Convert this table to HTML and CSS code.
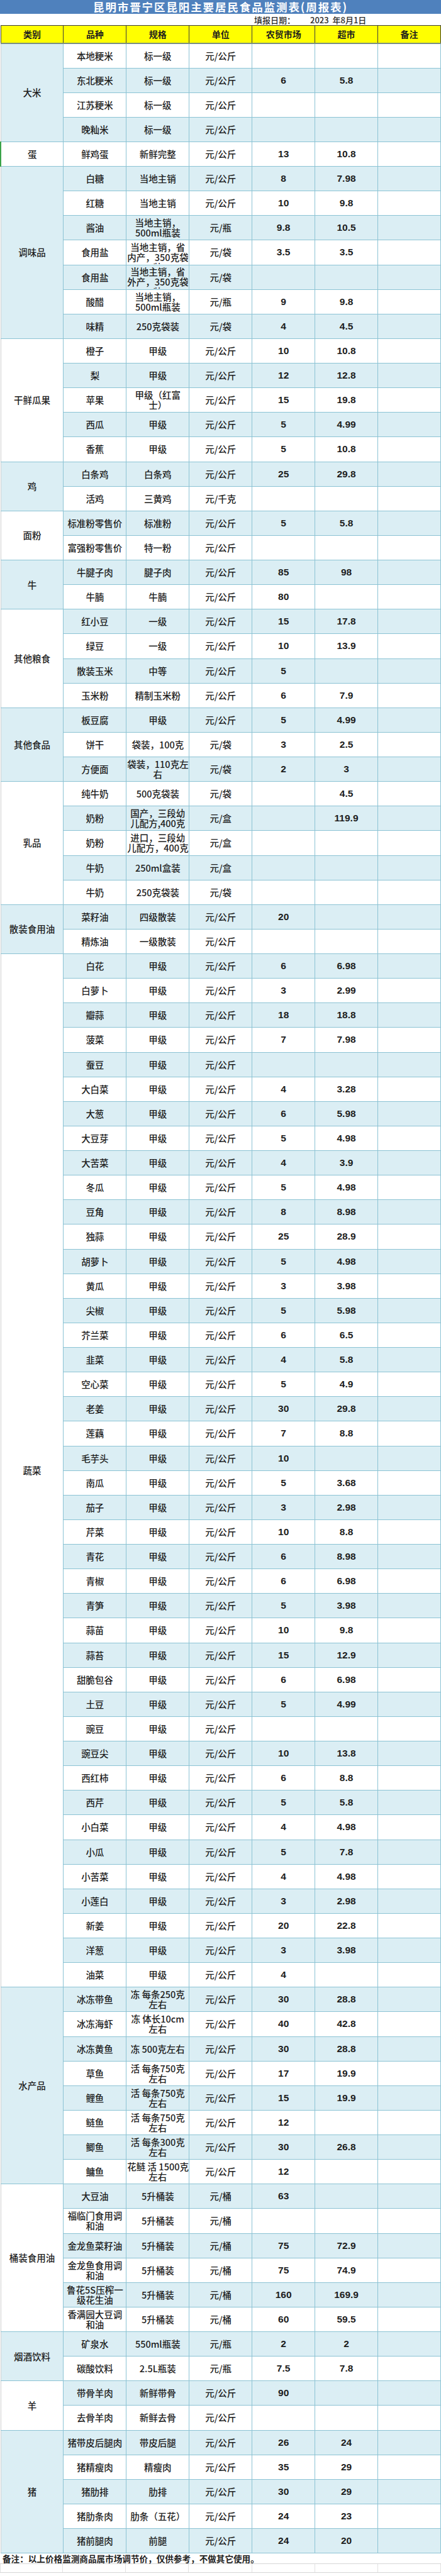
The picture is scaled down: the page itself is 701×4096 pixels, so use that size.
FILE: index.html
```html
<!DOCTYPE html>
<html lang="zh-CN">
<head>
<meta charset="utf-8">
<title>昆明市晋宁区昆阳主要居民食品监测表(周报表)</title>
<link rel="stylesheet" href="styles.css">
</head>
<body>
<div class="sheet">
  <div class="title">昆明市晋宁区昆阳主要居民食品监测表(周报表)</div>
  <div class="date"><span class="date-label">填报日期：</span><span class="date-value">2023&nbsp;&nbsp;年8月1日</span></div>
  <table class="grid">
    <colgroup><col><col><col><col><col><col><col></colgroup>
    <thead>
      <tr><th>类别</th><th>品种</th><th>规格</th><th>单位</th><th>农贸市场</th><th>超市</th><th>备注</th></tr>
    </thead>
    <tbody>
      <tr><td class="cat cat-blue" rowspan="4">大米</td><td>本地粳米</td><td>标一级</td><td>元/公斤</td><td class="num"></td><td class="num"></td><td></td></tr>
      <tr><td>东北粳米</td><td>标一级</td><td>元/公斤</td><td class="num">6</td><td class="num">5.8</td><td></td></tr>
      <tr><td>江苏粳米</td><td>标一级</td><td>元/公斤</td><td class="num"></td><td class="num"></td><td></td></tr>
      <tr><td>晚籼米</td><td>标一级</td><td>元/公斤</td><td class="num"></td><td class="num"></td><td></td></tr>

      <tr><td class="cat cat-white cat-green" rowspan="1">蛋</td><td>鲜鸡蛋</td><td>新鲜完整</td><td>元/公斤</td><td class="num">13</td><td class="num">10.8</td><td></td></tr>

      <tr><td class="cat cat-blue" rowspan="7">调味品</td><td>白糖</td><td>当地主销</td><td>元/公斤</td><td class="num">8</td><td class="num">7.98</td><td></td></tr>
      <tr><td>红糖</td><td>当地主销</td><td>元/公斤</td><td class="num">10</td><td class="num">9.8</td><td></td></tr>
      <tr><td>酱油</td><td>当地主销，<br>500ml瓶装</td><td>元/瓶</td><td class="num">9.8</td><td class="num">10.5</td><td></td></tr>
      <tr><td>食用盐</td><td><div class="clip">当地主销，省<br>内产，350克袋<br>装</div></td><td>元/袋</td><td class="num">3.5</td><td class="num">3.5</td><td></td></tr>
      <tr><td>食用盐</td><td><div class="clip">当地主销，省<br>外产，350克袋<br>装</div></td><td>元/袋</td><td class="num"></td><td class="num"></td><td></td></tr>
      <tr><td>酸醋</td><td>当地主销，<br>500ml瓶装</td><td>元/瓶</td><td class="num">9</td><td class="num">9.8</td><td></td></tr>
      <tr><td>味精</td><td>250克袋装</td><td>元/袋</td><td class="num">4</td><td class="num">4.5</td><td></td></tr>

      <tr><td class="cat cat-white" rowspan="5">干鲜瓜果</td><td>橙子</td><td>甲级</td><td>元/公斤</td><td class="num">10</td><td class="num">10.8</td><td></td></tr>
      <tr><td>梨</td><td>甲级</td><td>元/公斤</td><td class="num">12</td><td class="num">12.8</td><td></td></tr>
      <tr><td>苹果</td><td>甲级（红富<br>士）</td><td>元/公斤</td><td class="num">15</td><td class="num">19.8</td><td></td></tr>
      <tr><td>西瓜</td><td>甲级</td><td>元/公斤</td><td class="num">5</td><td class="num">4.99</td><td></td></tr>
      <tr><td>香蕉</td><td>甲级</td><td>元/公斤</td><td class="num">5</td><td class="num">10.8</td><td></td></tr>

      <tr><td class="cat cat-blue" rowspan="2">鸡</td><td>白条鸡</td><td>白条鸡</td><td>元/公斤</td><td class="num">25</td><td class="num">29.8</td><td></td></tr>
      <tr><td>活鸡</td><td>三黄鸡</td><td>元/千克</td><td class="num"></td><td class="num"></td><td></td></tr>

      <tr><td class="cat cat-white" rowspan="2">面粉</td><td>标准粉零售价</td><td>标准粉</td><td>元/公斤</td><td class="num">5</td><td class="num">5.8</td><td></td></tr>
      <tr><td>富强粉零售价</td><td>特一粉</td><td>元/公斤</td><td class="num"></td><td class="num"></td><td></td></tr>

      <tr><td class="cat cat-blue" rowspan="2">牛</td><td>牛腱子肉</td><td>腱子肉</td><td>元/公斤</td><td class="num">85</td><td class="num">98</td><td></td></tr>
      <tr><td>牛腩</td><td>牛腩</td><td>元/公斤</td><td class="num">80</td><td class="num"></td><td></td></tr>

      <tr><td class="cat cat-white" rowspan="4">其他粮食</td><td>红小豆</td><td>一级</td><td>元/公斤</td><td class="num">15</td><td class="num">17.8</td><td></td></tr>
      <tr><td>绿豆</td><td>一级</td><td>元/公斤</td><td class="num">10</td><td class="num">13.9</td><td></td></tr>
      <tr><td>散装玉米</td><td>中等</td><td>元/公斤</td><td class="num">5</td><td class="num"></td><td></td></tr>
      <tr><td>玉米粉</td><td>精制玉米粉</td><td>元/公斤</td><td class="num">6</td><td class="num">7.9</td><td></td></tr>

      <tr><td class="cat cat-blue" rowspan="3">其他食品</td><td>板豆腐</td><td>甲级</td><td>元/公斤</td><td class="num">5</td><td class="num">4.99</td><td></td></tr>
      <tr><td>饼干</td><td>袋装，100克</td><td>元/袋</td><td class="num">3</td><td class="num">2.5</td><td></td></tr>
      <tr><td>方便面</td><td>袋装，110克左<br>右</td><td>元/袋</td><td class="num">2</td><td class="num">3</td><td></td></tr>

      <tr><td class="cat cat-white" rowspan="5">乳品</td><td>纯牛奶</td><td>500克袋装</td><td>元/袋</td><td class="num"></td><td class="num">4.5</td><td></td></tr>
      <tr><td>奶粉</td><td>国产，三段幼<br>儿配方,400克</td><td>元/盒</td><td class="num"></td><td class="num">119.9</td><td></td></tr>
      <tr><td>奶粉</td><td>进口，三段幼<br>儿配方，400克</td><td>元/盒</td><td class="num"></td><td class="num"></td><td></td></tr>
      <tr><td>牛奶</td><td>250ml盒装</td><td>元/盒</td><td class="num"></td><td class="num"></td><td></td></tr>
      <tr><td>牛奶</td><td>250克袋装</td><td>元/袋</td><td class="num"></td><td class="num"></td><td></td></tr>

      <tr><td class="cat cat-blue" rowspan="2">散装食用油</td><td>菜籽油</td><td>四级散装</td><td>元/公斤</td><td class="num">20</td><td class="num"></td><td></td></tr>
      <tr><td>精炼油</td><td>一级散装</td><td>元/公斤</td><td class="num"></td><td class="num"></td><td></td></tr>

      <tr><td class="cat cat-white" rowspan="42">蔬菜</td><td>白花</td><td>甲级</td><td>元/公斤</td><td class="num">6</td><td class="num">6.98</td><td></td></tr>
      <tr><td>白萝卜</td><td>甲级</td><td>元/公斤</td><td class="num">3</td><td class="num">2.99</td><td></td></tr>
      <tr><td>瓣蒜</td><td>甲级</td><td>元/公斤</td><td class="num">18</td><td class="num">18.8</td><td></td></tr>
      <tr><td>菠菜</td><td>甲级</td><td>元/公斤</td><td class="num">7</td><td class="num">7.98</td><td></td></tr>
      <tr><td>蚕豆</td><td>甲级</td><td>元/公斤</td><td class="num"></td><td class="num"></td><td></td></tr>
      <tr><td>大白菜</td><td>甲级</td><td>元/公斤</td><td class="num">4</td><td class="num">3.28</td><td></td></tr>
      <tr><td>大葱</td><td>甲级</td><td>元/公斤</td><td class="num">6</td><td class="num">5.98</td><td></td></tr>
      <tr><td>大豆芽</td><td>甲级</td><td>元/公斤</td><td class="num">5</td><td class="num">4.98</td><td></td></tr>
      <tr><td>大苦菜</td><td>甲级</td><td>元/公斤</td><td class="num">4</td><td class="num">3.9</td><td></td></tr>
      <tr><td>冬瓜</td><td>甲级</td><td>元/公斤</td><td class="num">5</td><td class="num">4.98</td><td></td></tr>
      <tr><td>豆角</td><td>甲级</td><td>元/公斤</td><td class="num">8</td><td class="num">8.98</td><td></td></tr>
      <tr><td>独蒜</td><td>甲级</td><td>元/公斤</td><td class="num">25</td><td class="num">28.9</td><td></td></tr>
      <tr><td>胡萝卜</td><td>甲级</td><td>元/公斤</td><td class="num">5</td><td class="num">4.98</td><td></td></tr>
      <tr><td>黄瓜</td><td>甲级</td><td>元/公斤</td><td class="num">3</td><td class="num">3.98</td><td></td></tr>
      <tr><td>尖椒</td><td>甲级</td><td>元/公斤</td><td class="num">5</td><td class="num">5.98</td><td></td></tr>
      <tr><td>芥兰菜</td><td>甲级</td><td>元/公斤</td><td class="num">6</td><td class="num">6.5</td><td></td></tr>
      <tr><td>韭菜</td><td>甲级</td><td>元/公斤</td><td class="num">4</td><td class="num">5.8</td><td></td></tr>
      <tr><td>空心菜</td><td>甲级</td><td>元/公斤</td><td class="num">5</td><td class="num">4.9</td><td></td></tr>
      <tr><td>老姜</td><td>甲级</td><td>元/公斤</td><td class="num">30</td><td class="num">29.8</td><td></td></tr>
      <tr><td>莲藕</td><td>甲级</td><td>元/公斤</td><td class="num">7</td><td class="num">8.8</td><td></td></tr>
      <tr><td>毛芋头</td><td>甲级</td><td>元/公斤</td><td class="num">10</td><td class="num"></td><td></td></tr>
      <tr><td>南瓜</td><td>甲级</td><td>元/公斤</td><td class="num">5</td><td class="num">3.68</td><td></td></tr>
      <tr><td>茄子</td><td>甲级</td><td>元/公斤</td><td class="num">3</td><td class="num">2.98</td><td></td></tr>
      <tr><td>芹菜</td><td>甲级</td><td>元/公斤</td><td class="num">10</td><td class="num">8.8</td><td></td></tr>
      <tr><td>青花</td><td>甲级</td><td>元/公斤</td><td class="num">6</td><td class="num">8.98</td><td></td></tr>
      <tr><td>青椒</td><td>甲级</td><td>元/公斤</td><td class="num">6</td><td class="num">6.98</td><td></td></tr>
      <tr><td>青笋</td><td>甲级</td><td>元/公斤</td><td class="num">5</td><td class="num">3.98</td><td></td></tr>
      <tr><td>蒜苗</td><td>甲级</td><td>元/公斤</td><td class="num">10</td><td class="num">9.8</td><td></td></tr>
      <tr><td>蒜苔</td><td>甲级</td><td>元/公斤</td><td class="num">15</td><td class="num">12.9</td><td></td></tr>
      <tr><td>甜脆包谷</td><td>甲级</td><td>元/公斤</td><td class="num">6</td><td class="num">6.98</td><td></td></tr>
      <tr><td>土豆</td><td>甲级</td><td>元/公斤</td><td class="num">5</td><td class="num">4.99</td><td></td></tr>
      <tr><td>豌豆</td><td>甲级</td><td>元/公斤</td><td class="num"></td><td class="num"></td><td></td></tr>
      <tr><td>豌豆尖</td><td>甲级</td><td>元/公斤</td><td class="num">10</td><td class="num">13.8</td><td></td></tr>
      <tr><td>西红柿</td><td>甲级</td><td>元/公斤</td><td class="num">6</td><td class="num">8.8</td><td></td></tr>
      <tr><td>西芹</td><td>甲级</td><td>元/公斤</td><td class="num">5</td><td class="num">5.8</td><td></td></tr>
      <tr><td>小白菜</td><td>甲级</td><td>元/公斤</td><td class="num">4</td><td class="num">4.98</td><td></td></tr>
      <tr><td>小瓜</td><td>甲级</td><td>元/公斤</td><td class="num">5</td><td class="num">7.8</td><td></td></tr>
      <tr><td>小苦菜</td><td>甲级</td><td>元/公斤</td><td class="num">4</td><td class="num">4.98</td><td></td></tr>
      <tr><td>小莲白</td><td>甲级</td><td>元/公斤</td><td class="num">3</td><td class="num">2.98</td><td></td></tr>
      <tr><td>新姜</td><td>甲级</td><td>元/公斤</td><td class="num">20</td><td class="num">22.8</td><td></td></tr>
      <tr><td>洋葱</td><td>甲级</td><td>元/公斤</td><td class="num">3</td><td class="num">3.98</td><td></td></tr>
      <tr><td>油菜</td><td>甲级</td><td>元/公斤</td><td class="num">4</td><td class="num"></td><td></td></tr>

      <tr><td class="cat cat-blue" rowspan="8">水产品</td><td>冰冻带鱼</td><td>冻 每条250克<br>左右</td><td>元/公斤</td><td class="num">30</td><td class="num">28.8</td><td></td></tr>
      <tr><td>冰冻海虾</td><td>冻 体长10cm<br>左右</td><td>元/公斤</td><td class="num">40</td><td class="num">42.8</td><td></td></tr>
      <tr><td>冰冻黄鱼</td><td>冻 500克左右</td><td>元/公斤</td><td class="num">30</td><td class="num">28.8</td><td></td></tr>
      <tr><td>草鱼</td><td>活 每条750克<br>左右</td><td>元/公斤</td><td class="num">17</td><td class="num">19.9</td><td></td></tr>
      <tr><td>鲤鱼</td><td>活 每条750克<br>左右</td><td>元/公斤</td><td class="num">15</td><td class="num">19.9</td><td></td></tr>
      <tr><td>鲢鱼</td><td>活 每条750克<br>左右</td><td>元/公斤</td><td class="num">12</td><td class="num"></td><td></td></tr>
      <tr><td>鲫鱼</td><td>活 每条300克<br>左右</td><td>元/公斤</td><td class="num">30</td><td class="num">26.8</td><td></td></tr>
      <tr><td>鳙鱼</td><td>花鲢 活 1500克<br>左右</td><td>元/公斤</td><td class="num">12</td><td class="num"></td><td></td></tr>

      <tr><td class="cat cat-white" rowspan="6">桶装食用油</td><td>大豆油</td><td>5升桶装</td><td>元/桶</td><td class="num">63</td><td class="num"></td><td></td></tr>
      <tr><td>福临门食用调<br>和油</td><td>5升桶装</td><td>元/桶</td><td class="num"></td><td class="num"></td><td></td></tr>
      <tr><td>金龙鱼菜籽油</td><td>5升桶装</td><td>元/桶</td><td class="num">75</td><td class="num">72.9</td><td></td></tr>
      <tr><td>金龙鱼食用调<br>和油</td><td>5升桶装</td><td>元/桶</td><td class="num">75</td><td class="num">74.9</td><td></td></tr>
      <tr><td>鲁花5S压榨一<br>级花生油</td><td>5升桶装</td><td>元/桶</td><td class="num">160</td><td class="num">169.9</td><td></td></tr>
      <tr><td>香满园大豆调<br>和油</td><td>5升桶装</td><td>元/桶</td><td class="num">60</td><td class="num">59.5</td><td></td></tr>

      <tr><td class="cat cat-blue" rowspan="2">烟酒饮料</td><td>矿泉水</td><td>550ml瓶装</td><td>元/瓶</td><td class="num">2</td><td class="num">2</td><td></td></tr>
      <tr><td>碳酸饮料</td><td>2.5L瓶装</td><td>元/瓶</td><td class="num">7.5</td><td class="num">7.8</td><td></td></tr>

      <tr><td class="cat cat-white" rowspan="2">羊</td><td>带骨羊肉</td><td>新鲜带骨</td><td>元/公斤</td><td class="num">90</td><td class="num"></td><td></td></tr>
      <tr><td>去骨羊肉</td><td>新鲜去骨</td><td>元/公斤</td><td class="num"></td><td class="num"></td><td></td></tr>

      <tr><td class="cat cat-blue" rowspan="5">猪</td><td>猪带皮后腿肉</td><td>带皮后腿</td><td>元/公斤</td><td class="num">26</td><td class="num">24</td><td></td></tr>
      <tr><td>猪精瘦肉</td><td>精瘦肉</td><td>元/公斤</td><td class="num">35</td><td class="num">29</td><td></td></tr>
      <tr><td>猪肋排</td><td>肋排</td><td>元/公斤</td><td class="num">30</td><td class="num">29</td><td></td></tr>
      <tr><td>猪肋条肉</td><td>肋条（五花）</td><td>元/公斤</td><td class="num">24</td><td class="num">23</td><td></td></tr>
      <tr><td>猪前腿肉</td><td>前腿</td><td>元/公斤</td><td class="num">24</td><td class="num">20</td><td></td></tr>
    </tbody>
  </table>
  <div class="note">备注：以上价格监测商品属市场调节价，仅供参考，不做其它使用。</div>
  <div class="blank"><span></span><span></span><span></span><span></span><span></span><span></span><span></span></div>
</div>
</body>
</html>
```
FILE: styles.css
```css
html, body {
  margin: 0;
  padding: 0;
  background: #ffffff;
}

.sheet {
  width: 701px;
  font-family: "Noto Sans CJK SC", "Liberation Sans", sans-serif;
  color: #1d1d1d;
}

.title {
  height: 22px;
  background: #4f81bd;
  color: #ffffff;
  font-weight: 700;
  font-size: 17.5px;
  letter-spacing: 1.9px;
  line-height: 22px;
  text-align: center;
  white-space: nowrap;
}

.date {
  height: 18px;
  display: flex;
  align-items: center;
  padding-left: 404px;
  font-size: 13px;
  color: #2a2a2a;
  font-weight: 500;
}

.date-value {
  margin-left: 24px;
}

.grid {
  width: 701px;
  border-collapse: collapse;
  table-layout: fixed;
}

.grid col {
  width: 14.2857%;
}

.grid thead tr {
  height: 28.4px;
}

.grid th {
  background: #ffff00;
  font-weight: 700;
  font-size: 14px;
  border: 1px solid #3c3c3c;
  border-bottom: 2px solid #7a8f7f;
  padding: 0;
  text-align: center;
  vertical-align: middle;
}

.grid tbody tr {
  height: 39.14px;
}

.grid td {
  padding: 0 1px;
  text-align: center;
  vertical-align: middle;
  border: 1px solid #8cc3d4;
  font-size: 14.5px;
  line-height: 16px;
  font-weight: 500;
  background: #ffffff;
  white-space: nowrap;
  overflow: hidden;
}

.grid tbody tr:nth-child(even) td {
  background: #dbeef4;
}

.grid td.num {
  font-family: "Liberation Sans Narrow", "Liberation Sans", sans-serif;
  font-weight: 700;
  font-size: 15.5px;
}

.grid td.cat {
  border-left: 1px solid #cfcfcf;
}

.grid tbody tr td.cat-blue {
  background: #dbeef4;
}

.grid tbody tr td.cat-white {
  background: #ffffff;
}

.grid tbody tr td.cat-green {
  border-left: 2px solid #3aa34a;
}

.clip {
  height: 37px;
  overflow: hidden;
  padding-top: 2px;
  box-sizing: border-box;
}

.note {
  height: 16.5px;
  line-height: 16.5px;
  padding-left: 4px;
  font-size: 13.6px;
  font-weight: 700;
  color: #222;
  white-space: nowrap;
  border-bottom: 1px solid #d6d6d6;
  box-sizing: border-box;
}

.blank {
  display: grid;
  grid-template-columns: repeat(7, 1fr);
  height: 13.5px;
  border-bottom: 1px solid #d6d6d6;
}

.blank span {
  border-right: 1px solid #e2e2e2;
}

.blank span:first-child {
  border-left: 1px solid #e2e2e2;
}
```
